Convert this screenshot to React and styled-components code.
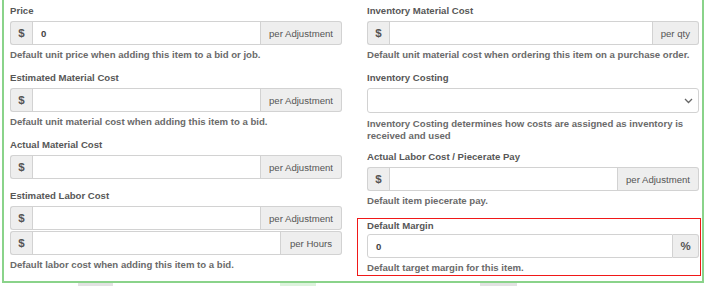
import React from "react";
import styled, { createGlobalStyle } from "styled-components";

const Global = createGlobalStyle`
  html, body { margin: 0; padding: 0; background: #fff; }
  body { font-family: "Liberation Sans", Arial, sans-serif; font-size: 9.6px; color: #555; }
  * { box-sizing: border-box; }
`;

const Page = styled.div`
  width: 707px;
  height: 287px;
  overflow: hidden;
`;

const Panel = styled.div`
  margin-left: 2px;
  width: 702px;
  border: 2px solid #8ad38a;
  border-top: none;
  padding: 4px 3px 5px 6px;
  display: grid;
  grid-template-columns: 332px 332px;
  column-gap: 25px;
  align-items: start;
`;

const Column = styled.div`
  display: flex;
  flex-direction: column;
`;

const Field = styled.div`
  display: flex;
  flex-direction: column;
  margin-bottom: ${(p) => p.$mb ?? 10}px;
`;

const Label = styled.div`
  font-weight: bold;
  font-size: 9.6px;
  line-height: ${(p) => p.$lh ?? 14}px;
  color: #575757;
  margin-bottom: ${(p) => p.$mb ?? 3}px;
`;

const Help = styled.div`
  font-weight: bold;
  font-size: 9.6px;
  line-height: ${(p) => p.$lh ?? 13}px;
  color: #6a6a6a;
  margin-top: ${(p) => p.$mt ?? 3}px;
`;

const Group = styled.div`
  display: flex;
  height: 24px;
  & + & { margin-top: 1px; }
`;

const Addon = styled.div`
  display: flex;
  align-items: center;
  justify-content: center;
  background: #eee;
  border: 1px solid #d2d2d2;
  color: #555;
  font-size: ${(p) => (p.$sym ? "11.5px" : "9.6px")};
  font-weight: ${(p) => (p.$sym ? "bold" : "normal")};
  padding: 0 ${(p) => p.$px ?? 8}px;
  ${(p) => (p.$w ? `width: ${p.$w}px;` : "")}
  flex: none;
  &:first-child { border-radius: 3px 0 0 3px; border-right: none; }
  &:last-child { border-radius: 0 3px 3px 0; border-left: none; }
`;

const Input = styled.div`
  flex: 1;
  border: 1px solid #d2d2d2;
  background: #fff;
  display: flex;
  align-items: center;
  padding-left: 8px;
  font-weight: bold;
  color: #444;
  font-size: 9.6px;
  &:first-child { border-radius: 3px 0 0 3px; }
`;

const Select = styled.div`
  height: 25px;
  border: 1px solid #d2d2d2;
  border-radius: 3px;
  background: #fff;
  display: flex;
  align-items: center;
  justify-content: flex-end;
  padding-right: 5px;
`;

const Highlight = styled.div`
  border: 1px solid #f01818;
  margin: 11px -2px 0 -10px;
  padding: 0 1px 1px 9px;
  display: flex;
  flex-direction: column;
`;

const StubRow = styled.div`
  display: flex;
  height: 3px;
  padding-left: 78px;
`;

const Stub = styled.div`
  width: ${(p) => p.$w}px;
  margin-right: ${(p) => p.$mr}px;
  background: ${(p) => p.$c};
`;

const Chevron = () => (
  <svg width="9" height="6" viewBox="0 0 9 6">
    <path d="M1 1 L4.5 4.5 L8 1" fill="none" stroke="#666" strokeWidth="1.3" />
  </svg>
);

const Money = ({ value, unit, unitPx }) => (
  <Group>
    <Addon $sym $w={22} $px={0}>$</Addon>
    <Input>{value}</Input>
    <Addon $px={unitPx}>{unit}</Addon>
  </Group>
);

export default function App() {
  return (
    <Page>
      <Global />
      <Panel>
        <Column>
          <Field>
            <Label>Price</Label>
            <Money value="0" unit="per Adjustment" />
            <Help>Default unit price when adding this item to a bid or job.</Help>
          </Field>
          <Field>
            <Label>Estimated Material Cost</Label>
            <Money unit="per Adjustment" />
            <Help>Default unit material cost when adding this item to a bid.</Help>
          </Field>
          <Field>
            <Label>Actual Material Cost</Label>
            <Money unit="per Adjustment" />
          </Field>
          <Field $mb={0}>
            <Label>Estimated Labor Cost</Label>
            <Money unit="per Adjustment" />
            <Money unit="per Hours" unitPx={9} />
            <Help>Default labor cost when adding this item to a bid.</Help>
          </Field>
        </Column>
        <Column>
          <Field>
            <Label>Inventory Material Cost</Label>
            <Money unit="per qty" />
            <Help>Default unit material cost when ordering this item on a purchase order.</Help>
          </Field>
          <Field $mb={8}>
            <Label>Inventory Costing</Label>
            <Select>
              <Chevron />
            </Select>
            <Help $mt={5} $lh={12}>
              Inventory Costing determines how costs are assigned as inventory is received and used
            </Help>
          </Field>
          <Field $mb={0}>
            <Label>Actual Labor Cost / Piecerate Pay</Label>
            <Money unit="per Adjustment" />
            <Help>Default item piecerate pay.</Help>
          </Field>
          <Highlight>
            <Label $lh={13} $mb={2}>Default Margin</Label>
            <Group>
              <Input>0</Input>
              <Addon $sym $w={26} $px={0}>%</Addon>
            </Group>
            <Help>Default target margin for this item.</Help>
          </Highlight>
        </Column>
      </Panel>
      <StubRow>
        <Stub $w={35} $mr={167} $c="#e2e2e2" />
        <Stub $w={36} $mr={164} $c="#dcf3dc" />
        <Stub $w={37} $mr={0} $c="#e2e2e2" />
      </StubRow>
    </Page>
  );
}
